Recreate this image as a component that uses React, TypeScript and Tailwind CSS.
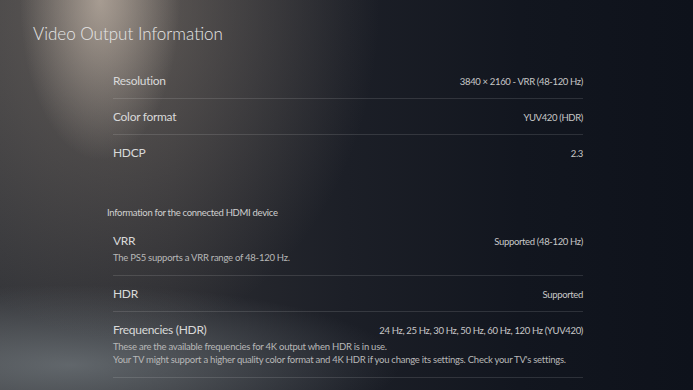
import React from 'react';

type Row = {
  label: string;
  value: string;
  desc?: string[];
  last?: boolean;
};

const outputRows: Row[] = [
  { label: 'Resolution', value: '3840 × 2160 - VRR (48-120 Hz)' },
  { label: 'Color format', value: 'YUV420 (HDR)' },
  { label: 'HDCP', value: '2.3', last: true },
];

const hdmiRows: Row[] = [
  { label: 'VRR', value: 'Supported (48-120 Hz)', desc: ['The PS5 supports a VRR range of 48-120 Hz.'] },
  { label: 'HDR', value: 'Supported' },
  {
    label: 'Frequencies (HDR)',
    value: '24 Hz, 25 Hz, 30 Hz, 50 Hz, 60 Hz, 120 Hz (YUV420)',
    desc: [
      'These are the available frequencies for 4K output when HDR is in use.',
      "Your TV might support a higher quality color format and 4K HDR if you change its settings. Check your TV's settings.",
    ],
  },
  { label: 'Frequencies (non-HDR)', value: '24 Hz, 25 Hz, 30 Hz, 50 Hz, 60 Hz, 120 Hz (YUV420)' },
];

function InfoRow({ row }: { row: Row }) {
  return (
    <div className={`pt-[10px] pb-[8px] ${row.last ? '' : 'border-b border-white/[0.12]'}`}>
      <div className="flex items-baseline justify-between">
        <span className="text-[12px] leading-[16px] tracking-[-0.3px] text-[#d9d9d9]">{row.label}</span>
        <span className="text-[9.5px] leading-[16px] tracking-[-0.35px] text-[#c8c8c8]">{row.value}</span>
      </div>
      {row.desc && (
        <div className="mt-[1px] pb-[3px]">
          {row.desc.map((d) => (
            <p key={d} className="text-[9.5px] leading-[13px] tracking-[-0.25px] whitespace-nowrap text-[#b8b8b8]">
              {d}
            </p>
          ))}
        </div>
      )}
    </div>
  );
}

export default function App() {
  return (
    <div className="w-[693px] h-[390px] overflow-hidden font-['Lato','Open_Sans',sans-serif] bg-[radial-gradient(ellipse_80px_160px_at_100px_0px,rgba(215,200,185,0.6),transparent),radial-gradient(ellipse_260px_340px_at_120px_0px,rgba(150,138,126,0.5),transparent),radial-gradient(ellipse_330px_80px_at_70px_365px,rgba(145,155,160,0.5),transparent),linear-gradient(to_right,#35363a_0%,#2b2c31_25%,#1c1f27_50%,#12161f_75%,#0e121b_100%)]">
      <div className="pt-[22px] pl-[33px]">
        <h1 className="text-[17px] leading-[24px] font-light text-[#e6e6e6]">Video Output Information</h1>
      </div>

      <div className="ml-[113px] w-[470px] mt-[17px]">
        {outputRows.map((r) => (
          <InfoRow key={r.label} row={r} />
        ))}

        <div className="mt-[37px] mb-[4px] -ml-[6px] text-[9.5px] leading-[12px] tracking-[-0.3px] text-[#d0d0d0]">
          Information for the connected HDMI device
        </div>

        {hdmiRows.map((r) => (
          <InfoRow key={r.label} row={r} />
        ))}
      </div>
    </div>
  );
}
